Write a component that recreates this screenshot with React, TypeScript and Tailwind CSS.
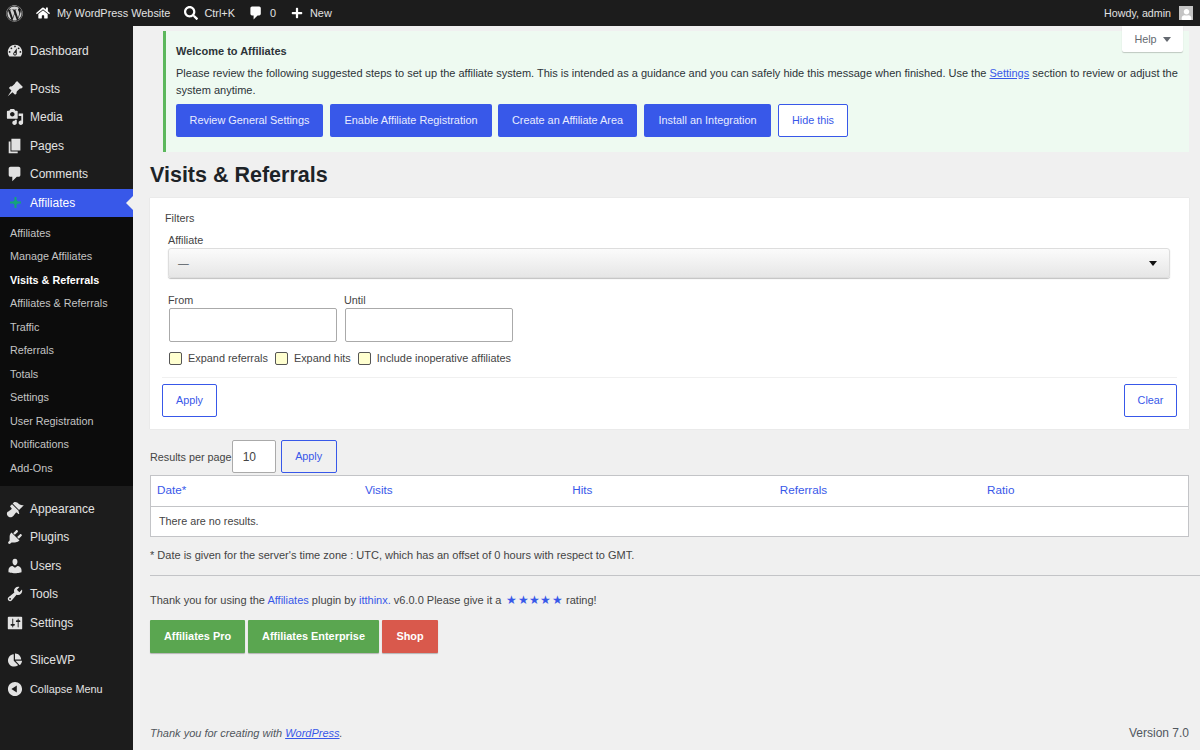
import { ReactNode } from "react";
import { FaWordpress, FaHome, FaSearch, FaPlus, FaUser, FaChartPie } from "react-icons/fa";

// dashicons, drawn by hand since no icon package ships them
const icons = {
  dashboard: "M3.76 16h12.48c1.1-1.37 1.76-3.11 1.76-5 0-4.42-3.58-8-8-8s-8 3.58-8 8c0 1.89.66 3.63 1.76 5zM10 4c.55 0 1 .45 1 1s-.45 1-1 1-1-.45-1-1 .45-1 1-1zM6 6c.55 0 1 .45 1 1s-.45 1-1 1-1-.45-1-1 .45-1 1-1zm8 0c.55 0 1 .45 1 1s-.45 1-1 1-1-.45-1-1 .45-1 1-1zm-5.37 5.55L12 7v6c0 1.1-.9 2-2 2s-2-.9-2-2c0-.57.24-1.08.63-1.45zM4 10c.55 0 1 .45 1 1s-.45 1-1 1-1-.45-1-1 .45-1 1-1zm12 0c.55 0 1 .45 1 1s-.45 1-1 1-1-.45-1-1 .45-1 1-1zm-5 3c0-.55-.45-1-1-1s-1 .45-1 1 .45 1 1 1 1-.45 1-1z",
  post: "M10.44 3.02l1.82-1.82 6.55 6.55-1.82 1.82c-.66-.4-1.57-.26-2.12.3l-2.63 2.63c-.56.56-.7 1.46-.3 2.12l-1.82 1.82-2.9-2.9L2 18l4.07-6.24-2.9-2.9 1.82-1.82c.66.4 1.57.26 2.12-.3l2.63-2.63c.56-.56.7-1.46.3-2.12z",
  media: "M13 11V4c0-.55-.45-1-1-1h-1.67L9 1H5L3.67 3H2c-.55 0-1 .45-1 1v7c0 .55.45 1 1 1h10c.55 0 1-.45 1-1zM7 4.5c1.38 0 2.5 1.12 2.5 2.5S8.38 9.5 7 9.5 4.5 8.38 4.5 7 5.62 4.5 7 4.5zM14 6h5v10.5c0 1.38-1.12 2.5-2.5 2.5S14 17.88 14 16.5s1.12-2.5 2.5-2.5c.17 0 .34.02.5.05V9h-3V6zm-4 8.05V13h2v3.5c0 1.38-1.12 2.5-2.5 2.5S7 17.88 7 16.5 8.12 14 9.5 14c.17 0 .34.02.5.05z",
  pages: "M6 15V2h10v13H6zm-1 1h8v2H3V5h2v11z",
  comment: "M5 2h9c1.1 0 2 .9 2 2v7c0 1.1-.9 2-2 2h-2l-5 5v-5H5c-1.1 0-2-.9-2-2V4c0-1.1.9-2 2-2z",
  appearance: "M14.48 11.06L7.41 3.99l1.5-1.5c.5-.56 2.3-.47 3.51.32 1.21.8 1.43 1.28 2.91 2.1 1.18.64 2.45 1.26 4.45.85zm-.71.71L6.7 4.7 4.93 6.47c-.39.39-.39 1.02 0 1.41l1.06 1.06c.39.39.39 1.03 0 1.42-.6.6-1.43 1.11-2.21 1.69-.35.26-.7.53-1.01.84C1.43 13.23 1 14.2 1 15.22c0 .68.2 1.37.6 2.04.32.53.8 1.02 1.39 1.37.68.4 1.37.6 2.04.6 1.02 0 1.99-.43 3.33-1.78.31-.31.58-.66.84-1.01.58-.78 1.09-1.61 1.69-2.21.39-.39 1.03-.39 1.42 0l1.06 1.06c.39.39 1.02.39 1.41 0z",
  plugins: "M13.11 4.36L9.87 7.6 8 5.73l3.24-3.24c.35-.34 1.05-.2 1.56.32.52.51.66 1.21.31 1.55zm-8 1.77l.91-1.12 9.01 9.01-1.19.84c-.71.71-2.63 1.16-3.82 1.16H6.14L4.9 17.26c-.59.59-1.54.59-2.12 0-.59-.58-.59-1.53 0-2.12l1.24-1.24v-3.88c0-1.13.4-3.19 1.09-3.89zm7.26 3.97l3.24-3.24c.34-.35 1.04-.21 1.55.31.52.51.66 1.21.31 1.55l-3.24 3.25z",
  users: "M10 9.25c-2.27 0-2.73-3.44-2.73-3.44C7 4.02 7.82 2 9.97 2c2.16 0 2.98 2.02 2.71 3.81 0 0-.41 3.44-2.68 3.44zm0 2.57L12.72 10c2.39 0 4.52 2.33 4.52 4.53v2.49s-3.65 1.13-7.24 1.13c-3.65 0-7.24-1.13-7.24-1.13v-2.49c0-2.25 1.94-4.48 4.47-4.48z",
  tools: "M16.68 9.77c-1.34 1.34-3.3 1.67-4.95.99l-5.41 6.52c-.99.99-2.59.99-3.58 0s-.99-2.59 0-3.57l6.52-5.42c-.68-1.65-.35-3.61.99-4.95 1.28-1.28 3.12-1.62 4.72-1.06l-2.89 2.89 2.82 2.82 2.86-2.87c.53 1.58.18 3.39-1.08 4.67zM3.81 16.21c.4.39 1.04.39 1.43 0 .4-.4.4-1.04 0-1.43-.39-.4-1.03-.4-1.43 0-.39.39-.39 1.03 0 1.43z",
  settings: "M18 16V4c0-.55-.45-1-1-1H3c-.55 0-1 .45-1 1v12c0 .55.45 1 1 1h14c.55 0 1-.45 1-1zM8 11h1c.55 0 1 .45 1 1s-.45 1-1 1H8v1.5c0 .28-.22.5-.5.5s-.5-.22-.5-.5V13H6c-.55 0-1-.45-1-1s.45-1 1-1h1V5.5c0-.28.22-.5.5-.5s.5.22.5.5V11zm5-2h-1c-.55 0-1-.45-1-1s.45-1 1-1h1V5.5c0-.28.22-.5.5-.5s.5.22.5.5V7h1c.55 0 1 .45 1 1s-.45 1-1 1h-1v5.5c0 .28-.22.5-.5.5s-.5-.22-.5-.5V9z",
  collapse: "M10 2.16c4.33 0 7.84 3.51 7.84 7.84s-3.51 7.84-7.84 7.84S2.16 14.33 2.16 10 5.67 2.16 10 2.16zM12 14V6l-6 4z",
};

function Dash({ name, size = 18, className = "" }: { name: keyof typeof icons; size?: number; className?: string }) {
  return (
    <svg width={size} height={size} viewBox="0 0 20 20" fill="currentColor" fillRule="evenodd" className={className}>
      <path d={icons[name]} />
    </svg>
  );
}

const AffiliatesIcon = () => (
  <svg width="11" height="11" viewBox="0 0 11 11" fill="#14a37a">
    <path d="M4.5 0h2v3.2L8 4.5h3v2H8L6.5 7.8V11h-2V7.8L3 6.500H0v-2h3l1.5-1.3z" />
  </svg>
);

function MenuItem({ icon, label, active, small }: { icon: ReactNode; label: string; active?: boolean; small?: boolean }) {
  return (
    <div className={`relative flex h-[28.5px] items-center ${small ? "text-[10.9px]" : "text-[12px]"} ${active ? "bg-[#3858e9] text-white" : "text-[#e2e2e2]"}`}>
      <span className="flex w-[30px] shrink-0 justify-center">{icon}</span>
      <span>{label}</span>
      {active && <span className="absolute right-0 top-[7px] h-0 w-0 border-y-[7px] border-r-[7px] border-y-transparent border-r-[#f0f0f0]" />}
    </div>
  );
}

const submenu = ["Affiliates", "Manage Affiliates", "Visits & Referrals", "Affiliates & Referrals", "Traffic", "Referrals", "Totals", "Settings", "User Registration", "Notifications", "Add-Ons"];

function Sidebar() {
  return (
    <div className="w-[133px] shrink-0 bg-[#1c1c1c] pt-[11px]">
      <MenuItem icon={<Dash name="dashboard" />} label="Dashboard" />
      <div className="mt-[9px]">
        <MenuItem icon={<Dash name="post" />} label="Posts" />
        <MenuItem icon={<Dash name="media" />} label="Media" />
        <MenuItem icon={<Dash name="pages" />} label="Pages" />
        <MenuItem icon={<Dash name="comment" />} label="Comments" />
        <MenuItem icon={<AffiliatesIcon />} label="Affiliates" active />
      </div>
      <div className="bg-[#0c0c0c] pb-[6px] pt-[4px]">
        {submenu.map((s) => (
          <div key={s} className={`flex h-[23.5px] items-center pl-[10px] text-[10.8px] ${s === "Visits & Referrals" ? "font-bold text-white" : "text-[#c4c4c4]"}`}>
            {s}
          </div>
        ))}
      </div>
      <div className="mt-[9px]">
        <MenuItem icon={<Dash name="appearance" />} label="Appearance" />
        <MenuItem icon={<Dash name="plugins" />} label="Plugins" />
        <MenuItem icon={<Dash name="users" />} label="Users" />
        <MenuItem icon={<Dash name="tools" />} label="Tools" />
        <MenuItem icon={<Dash name="settings" />} label="Settings" />
      </div>
      <div className="mt-[9px]">
        <MenuItem icon={<FaChartPie size={14} />} label="SliceWP" />
        <MenuItem icon={<Dash name="collapse" />} label="Collapse Menu" small />
      </div>
    </div>
  );
}

function AdminBar() {
  return (
    <div className="flex h-[26px] shrink-0 items-center bg-[#1c1c1c] text-[10.9px] text-[#e2e2e2]">
      <span className="flex w-[29px] justify-center"><FaWordpress size={17} className="text-[#cfcfcf]" /></span>
      <FaHome size={14} className="ml-[7px] text-white" />
      <span className="ml-[7px]">My WordPress Website</span>
      <FaSearch size={14} className="ml-[14px] text-white" />
      <span className="ml-[6px]">Ctrl+K</span>
      <Dash name="comment" size={16} className="ml-[13px] text-white" />
      <span className="ml-[6px]">0</span>
      <FaPlus size={12} className="ml-[15px] text-white" />
      <span className="ml-[7px]">New</span>
      <span className="ml-auto text-[10.7px]">Howdy, admin</span>
      <span className="ml-[8px] mr-[7px] flex h-[14px] w-[14px] items-end justify-center overflow-hidden bg-[#c4c4c4]">
        <FaUser size={11} className="text-white" />
      </span>
    </div>
  );
}

const blueBtn = "flex h-[33px] items-center justify-center rounded-[2px] bg-[#3858e9] text-[10.9px] text-[#e8ecff]";
const outlineBtn = "flex h-[33px] items-center justify-center rounded-[2px] border border-[#3858e9] text-[10.8px] text-[#3858e9]";
const greenBtn = "flex h-[33px] items-center justify-center rounded-[1px] bg-[#5aa650] shadow-[0_1px_1px_rgba(0,0,0,0.25)]";
const field = "h-[34px] rounded-[2px] border border-[#aaa] bg-white";

function Check({ label, className = "" }: { label: string; className?: string }) {
  return (
    <div className={`flex items-center ${className}`}>
      <span className="h-[13px] w-[13px] rounded-[2px] border border-[#555] bg-[#ffffd0]" />
      <span className="ml-[6px]">{label}</span>
    </div>
  );
}

export default function App() {
  return (
    <div className="flex h-[750px] w-[1200px] flex-col overflow-hidden bg-[#f0f0f0] text-[11px] text-[#444] [font-family:'Liberation_Sans',Arial,sans-serif]">
      <AdminBar />
      <div className="flex flex-1">
        <Sidebar />
        <div className="relative flex flex-1 flex-col pl-[17px]">
          <div className="absolute right-[17px] top-0 z-10 flex h-[26px] w-[61px] items-center justify-center gap-[6px] rounded-b-[2px] bg-white text-[10.8px] text-[#646970] shadow-[0_1px_1px_rgba(0,0,0,0.2)]">
            Help <span className="h-0 w-0 border-x-[4px] border-t-[5px] border-x-transparent border-t-[#646970]" />
          </div>

          <div className="ml-[13px] mr-[11px] mt-[5px] h-[121px] border-l-[3px] border-[#5cb85c] bg-[#eefaf1] pl-[10px] pr-[10px] pt-[12px] text-[#2c3338]">
            <div className="text-[11px] font-bold leading-[16px]">Welcome to Affiliates</div>
            <p className="mt-[6px] text-[11px] leading-[16.5px]">
              Please review the following suggested steps to set up the affiliate system. This is intended as a guidance and you can safely hide this message when finished. Use the <span className="text-[#3858e9] underline">Settings</span> section to review or adjust the system anytime.
            </p>
            <div className="mt-[6px] flex">
              <div className={`${blueBtn} w-[147px]`}>Review General Settings</div>
              <div className={`${blueBtn} ml-[7px] w-[162px]`}>Enable Affiliate Registration</div>
              <div className={`${blueBtn} ml-[6px] w-[139px]`}>Create an Affiliate Area</div>
              <div className={`${blueBtn} ml-[7px] w-[127px]`}>Install an Integration</div>
              <div className={`${outlineBtn} ml-[7px] w-[70px] bg-white`}>Hide this</div>
            </div>
          </div>

          <h1 className="mt-[9px] text-[21.5px] font-bold leading-[28px] text-[#1d2327]">Visits &amp; Referrals</h1>

          <div className="mr-[11px] mt-[9px] h-[231px] bg-white px-[12px] pt-[14px] text-[10.8px] shadow-[0_0_1px_rgba(0,0,0,0.15)]">
            <div className="ml-[3px] leading-[13px]">Filters</div>
            <div className="ml-[6px] mt-[9px] leading-[13px]">Affiliate</div>
            <div className="ml-[6px] mr-[7px] mt-[1px] flex h-[30px] items-center justify-between rounded-[3px] border border-[#ddd] bg-gradient-to-b from-[#fbfbfb] to-[#e6e6e6] pl-[9px] pr-[12px] text-[#50575e] shadow-[0_1px_1px_rgba(0,0,0,0.25)]">
              <span>—</span>
              <span className="h-0 w-0 border-x-[4.5px] border-t-[5px] border-x-transparent border-t-[#111]" />
            </div>
            <div className="ml-[6px] mt-[16px] flex gap-[7px]">
              <div className="flex flex-col">
                <span className="leading-[13px]">From</span>
                <div className={`${field} ml-[1px] mt-[1px] w-[168px]`} />
              </div>
              <div className="flex flex-col">
                <span className="leading-[13px]">Until</span>
                <div className={`${field} ml-[1px] mt-[1px] w-[168px]`} />
              </div>
            </div>
            <div className="ml-[7px] mt-[9px] flex h-[14px] items-center text-[10.9px]">
              <Check label="Expand referrals" />
              <Check label="Expand hits" className="ml-[7px]" />
              <Check label="Include inoperative affiliates" className="ml-[7px]" />
            </div>
            <div className="mt-[12px] flex justify-between border-t border-[#f0f0f0] pt-[6px]">
              <div className={`${outlineBtn} w-[55px] bg-white`}>Apply</div>
              <div className={`${outlineBtn} w-[53px] bg-white`}>Clear</div>
            </div>
          </div>

          <div className="mt-[11px] flex items-center text-[10.8px]">
            <span className="mt-[2px]">Results per page</span>
            <div className="flex h-[33px] w-[44px] items-center rounded-[2px] border border-[#aaa] bg-white pl-[10px] text-[12px]">10</div>
            <div className={`${outlineBtn} ml-[5px] w-[56px]`}>Apply</div>
          </div>

          <div className="mr-[11px] mt-[2px] border border-[#c3c4c7] bg-white">
            <div className="grid h-[31px] grid-cols-5 items-center border-b border-[#c3c4c7] pb-[2px] text-[11.7px] text-[#3858e9]">
              <span className="pl-[6px]">Date*</span>
              <span className="pl-[6.5px]">Visits</span>
              <span className="pl-[6.5px]">Hits</span>
              <span className="pl-[6.5px]">Referrals</span>
              <span className="pl-[6.5px]">Ratio</span>
            </div>
            <div className="flex h-[29px] items-center pl-[8px] text-[10.8px]">There are no results.</div>
          </div>

          <p className="mt-[12px] leading-[13px]">* Date is given for the server's time zone : UTC, which has an offset of 0 hours with respect to GMT.</p>
          <div className="mt-[13px] border-t border-[#c3c4c7]" />
          <p className="mt-[17px] leading-[14px]">
            Thank you for using the <span className="text-[#3858e9]">Affiliates</span> plugin by <span className="text-[#3858e9]">itthinx.</span> v6.0.0 Please give it a <span className="ml-[2px] text-[11.5px] tracking-[0.3px] text-[#3858e9]">★★★★★</span> rating!
          </p>
          <div className="mt-[13px] flex gap-[3px] text-[10.9px] font-bold text-white">
            <div className={`${greenBtn} w-[95px]`}>Affiliates Pro</div>
            <div className={`${greenBtn} w-[131px]`}>Affiliates Enterprise</div>
            <div className={`${greenBtn} w-[56px] !bg-[#d9594c]`}>Shop</div>
          </div>

          <div className="mb-[8px] mt-auto flex items-center justify-between pr-[11px] text-[#50575e]">
            <i>Thank you for creating with <span className="text-[#3858e9] underline">WordPress</span>.</i>
            <span className="text-[12px]">Version 7.0</span>
          </div>
        </div>
      </div>
    </div>
  );
}
